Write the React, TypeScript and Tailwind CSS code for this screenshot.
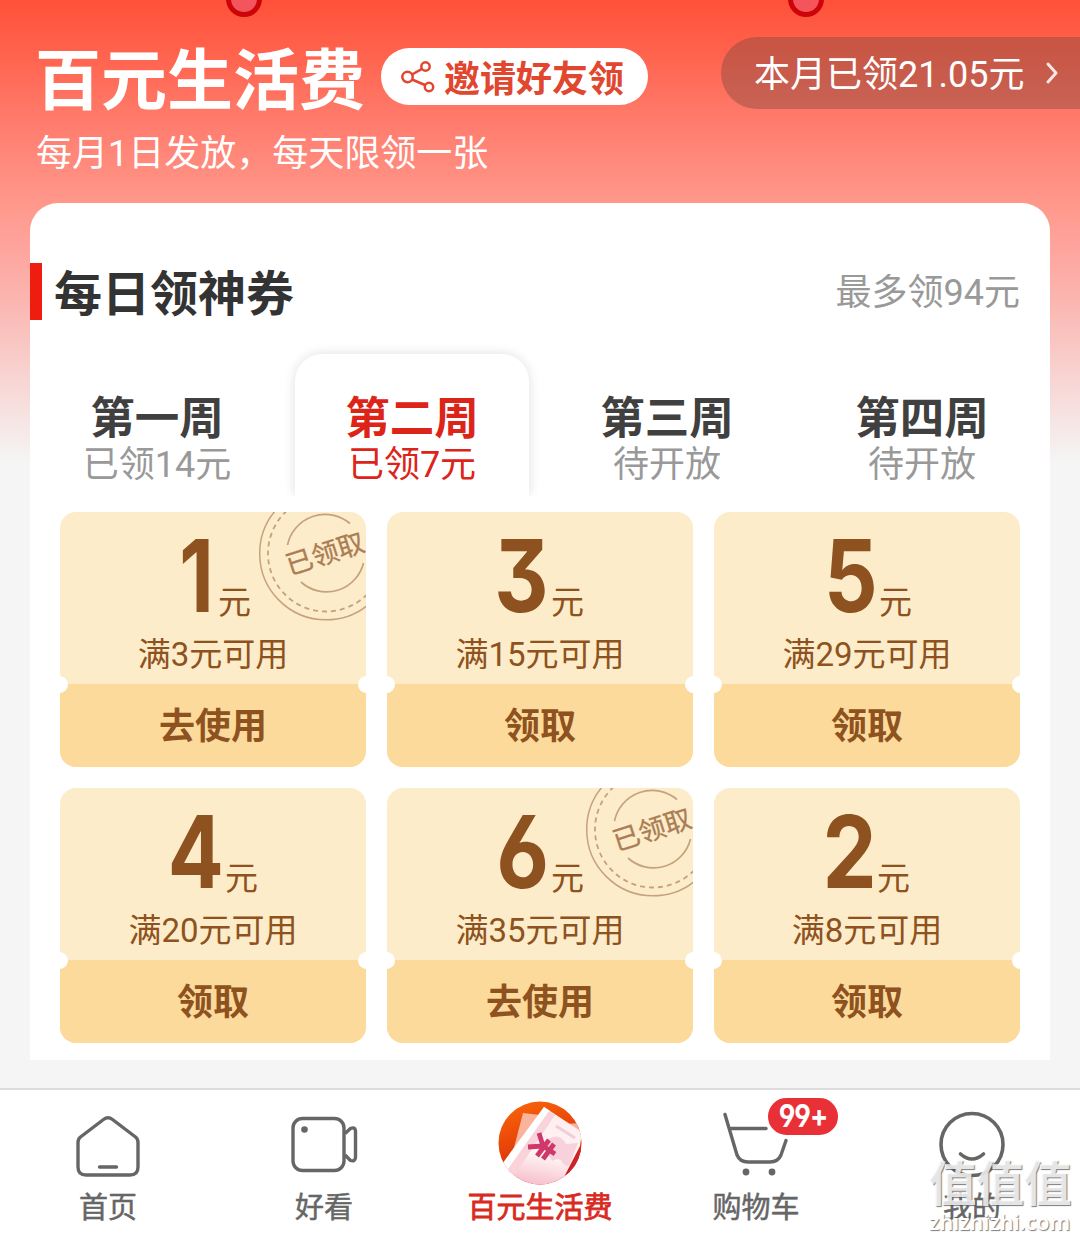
import React from "react";

type Coupon = { value: string; width: string; rule: string; used?: boolean };

const coupons: Coupon[] = [
  { value: "1", width: "w-[43px]", rule: "满3元可用", used: true },
  { value: "3", width: "w-[55px]", rule: "满15元可用" },
  { value: "5", width: "w-[57px]", rule: "满29元可用" },
  { value: "4", width: "w-[57px]", rule: "满20元可用" },
  { value: "6", width: "w-[55px]", rule: "满35元可用", used: true },
  { value: "2", width: "w-[53px]", rule: "满8元可用" },
];

const digitStyle: Record<string, string> = {
  "1": "scale-x-[0.8]",
  "2": "scale-x-[0.86] -translate-x-px",
  "3": "scale-x-[0.84] -translate-x-[2px]",
  "4": "scale-x-[0.83] -translate-x-px",
  "5": "scale-x-[0.84]",
  "6": "scale-x-[0.86] -translate-x-px",
};

const weeks = [
  { name: "第一周", note: "已领14元" },
  { name: "第二周", note: "已领7元", active: true },
  { name: "第三周", note: "待开放" },
  { name: "第四周", note: "待开放" },
];

function Stamp() {
  return (
    <svg className="absolute left-[196px] top-[-30px] h-[142px] w-[142px]" viewBox="0 0 142 142" fill="none" stroke="#a87a55" strokeOpacity="0.65">
      <circle cx="70" cy="71.500" r="66.300" strokeWidth="1.500" />
      <circle cx="70" cy="71.500" r="58" strokeWidth="1.800" strokeDasharray="5 4" />
      <path d="M31.500 63A38.500 38.500 0 0 1 94 41.500" strokeWidth="1.700" />
      <path d="M45 100A38 38 0 0 0 107.500 81" strokeWidth="1.700" />
      <text x="69" y="81" textAnchor="middle" fontSize="27" fontWeight="400" fill="#ab7d55" stroke="#ab7d55" strokeWidth="0.300" strokeOpacity="1" transform="rotate(-18 70 71.500)">已领取</text>
    </svg>
  );
}

function CouponCard({ value, width, rule, used }: Coupon) {
  return (
    <div className="relative flex h-[255px] flex-col overflow-hidden rounded-[16px] bg-[#fdecc9] text-[#8d5220]">
      <div className="flex h-[172px] flex-col items-center">
        <div className="mt-[15px] flex h-[100px] items-end justify-center">
          <span className={`flex h-[100px] justify-center pb-[2px] font-[Inter] text-[100px] font-[650] leading-[97px] [font-feature-settings:'cv03','cv09'] ${width}`}>
            <span className={digitStyle[value]}>{value}</span>
          </span>
          <span className="mb-[2px] text-[33px] leading-[44px]">元</span>
        </div>
        <p className="mt-[6px] text-[33px] leading-[44px]">{rule}</p>
      </div>
      <div className="flex h-[83px] items-center justify-center bg-[#fcda9b] pt-[2px] text-[36px] font-bold leading-[50px]">
        {used ? "去使用" : "领取"}
      </div>
      {used && <Stamp />}
      <i className="absolute left-[-9px] top-[164px] size-[17px] rounded-full bg-white" />
      <i className="absolute right-[-9px] top-[164px] size-[17px] rounded-full bg-white" />
    </div>
  );
}

function Pin() {
  return <i className="h-[36px] w-[36px] rounded-full border-[5px] border-[#cd0508] bg-[#f4555d]" />;
}

function NavItem({ label, active, children }: { label: string; active?: boolean; children: React.ReactNode }) {
  return (
    <div className={`relative flex w-[216px] flex-col items-center ${active ? "text-[#d92a22]" : "text-[#666]"}`}>
      <div className="h-[98px]">{children}</div>
      <span className={`text-[29px] leading-[40px] ${active ? "[-webkit-text-stroke:0.8px_currentColor]" : "[-webkit-text-stroke:0.5px_currentColor]"}`}>{label}</span>
    </div>
  );
}

export default function App() {
  return (
    <div className="relative flex h-[1240px] w-[1080px] flex-col overflow-hidden bg-[#f5f5f5] bg-[linear-gradient(180deg,#ff5138_0px,#ff6550_60px,#ff7b6c_120px,#ff988b_203px,#fea29a_240px,#fbb5b0_300px,#f7d5d3_380px,#f5f5f5_462px)] bg-no-repeat font-[Roboto,'Noto_Sans_CJK_SC',sans-serif]">
      <div className="absolute left-[226px] top-[-19px] flex gap-[526px]">
        <Pin />
        <Pin />
      </div>

      <header className="flex h-[203px] shrink-0 flex-col">
        <div className="mt-[37px] flex h-[84px] items-start">
          <h1 className="ml-[35px] mt-[5px] text-[66px] font-bold leading-[80px] text-white">百元生活费</h1>
          <div className="ml-[16px] mt-[11px] flex h-[57px] w-[267px] items-center rounded-full bg-white text-[#e1462f]">
            <svg className="ml-[20px] h-[34px] w-[36px]" viewBox="0 0 36 34" fill="none" stroke="currentColor" strokeWidth="2.500">
              <circle cx="6.500" cy="17" r="5.200" />
              <circle cx="24.500" cy="6.500" r="4.200" />
              <circle cx="28" cy="27" r="4.200" />
              <path d="M11 14.500 21 8.800M11 19.500l13 5.500" />
            </svg>
            <span className="ml-[7px] mt-[6px] text-[36px] font-bold leading-[50px]">邀请好友领</span>
          </div>
          <div className="ml-auto flex h-[72px] w-[359px] items-center rounded-l-full bg-[#75473c]/40 pl-[33px] text-[36px] text-white">
            <span className="mt-[3px] leading-[50px]">本月已领21.05元</span>
            <svg className="ml-[21px] h-[24px] w-[14px]" viewBox="0 0 14 24" fill="none" stroke="currentColor" strokeOpacity="0.850" strokeWidth="3" strokeLinecap="round" strokeLinejoin="round">
              <path d="m3 3 8 9-8 9" />
            </svg>
          </div>
        </div>
        <p className="ml-[36px] mt-[8px] text-[36px] leading-[50px] text-white">每月1日发放，每天限领一张</p>
      </header>

      <main className="mx-[30px] flex h-[857px] shrink-0 flex-col rounded-t-[28px] bg-white">
        <div className="mt-[60px] flex h-[57px] items-center">
          <i className="h-[57px] w-[12px] bg-[#ef1c10]" />
          <h2 className="ml-[12px] mt-[6px] text-[48px] font-bold leading-[60px] text-[#333]">每日领神券</h2>
          <span className="ml-auto mr-[30px] mt-[2px] text-[36px] leading-[50px] text-[#999]">最多领94元</span>
        </div>
        <div className="mt-[20px] flex h-[156px] items-end overflow-hidden">
          {weeks.map((w) => (
            <div
              key={w.name}
              className={`mr-[21px] flex h-[142px] w-[234px] flex-col items-center rounded-t-[27px] pt-[37px] first:ml-[10px] last:mr-0 ${
                w.active ? "text-[#dc2419] shadow-[0_0_12px_rgba(0,0,0,0.13)]" : ""
              }`}
            >
              <b className={`text-[44.5px] leading-[56px] ${w.active ? "" : "text-[#404040]"}`}>{w.name}</b>
              <span className={`mt-[-6px] text-[36px] leading-[48px] ${w.active ? "" : "text-[#999]"}`}>{w.note}</span>
            </div>
          ))}
        </div>
        <div className="mx-[30px] mt-[16px] grid grid-cols-3 gap-[21px]">
          {coupons.map((c) => (
            <CouponCard key={c.value} {...c} />
          ))}
        </div>
      </main>

      <nav className="relative mt-[28px] flex h-[152px] shrink-0 border-t-2 border-[#dcdcdc] bg-white">
        <NavItem label="首页">
          <svg className="mt-[24px] h-[66px] w-[66px]" viewBox="0 0 66 66" fill="none" stroke="currentColor" strokeWidth="3.400" strokeLinecap="round">
            <path d="M28.500 5.500Q33 2 37.500 5.500L60.500 23Q63 25 63 28.500V53Q63 61 55 61H11Q3 61 3 53V28.500Q3 25 5.500 23Z" />
            <path d="M24.500 53h17" />
          </svg>
        </NavItem>
        <NavItem label="好看">
          <svg className="mt-[24px] h-[66px] w-[70px]" viewBox="0 0 70 66" fill="none" stroke="currentColor" strokeWidth="3.400">
            <rect x="4" y="4.500" width="51" height="52" rx="9.500" />
            <circle cx="15.500" cy="15.500" r="3.300" fill="currentColor" stroke="none" />
            <path d="M56 19.500 61.500 14.500Q66 12.500 66.500 17V43.500Q66 48 61.500 46.500L56 41" />
          </svg>
        </NavItem>
        <NavItem label="百元生活费" active>
          <svg className="mt-[11px] h-[84px] w-[84px]" viewBox="0 0 84 84">
            <defs>
              <clipPath id="disc"><circle cx="42" cy="42" r="41.500" /></clipPath>
              <linearGradient id="orange" x1="0" y1="0" x2=".35" y2="1">
                <stop stopColor="#fb6a0a" /><stop offset=".55" stopColor="#e74208" /><stop offset="1" stopColor="#c81818" />
              </linearGradient>
              <linearGradient id="paper" x1=".5" y1="0" x2=".3" y2="1">
                <stop stopColor="#fdeef0" /><stop offset=".6" stopColor="#fff3f4" /><stop offset="1" stopColor="#f6bcc8" />
              </linearGradient>
            </defs>
            <g clipPath="url(#disc)">
              <rect width="84" height="84" fill="url(#orange)" />
              <path d="M25 12 42 14 32 55 12 62Z" fill="#f9b49a" />
              <path d="M65 23 84 22V36L76 31Z" fill="#f6b09c" />
              <path d="M46 6 84 31 82 45 62 84H24L4 66Z" fill="url(#paper)" />
              <path d="M46 6 52 10 10 70 4 63Z" fill="#fff" />
              <path d="M51 10 57 14 16 75 10 68Z" fill="#f9d2da" />
              <path d="M50 38Q62 31 68 43L80 42 71 65Q66 66 63 59 59 57 54 60 45 48 50 38" fill="#f7d2dc" />
              <path d="M58 25 77 37" stroke="#f2cdd5" strokeWidth="3" />
              <path d="M84 45 66 78 84 65Z" fill="#cc2332" />
              <path d="M41 32 45 45 30 46M45 45 57 53M51 39 39 55M56 43 45 58" fill="none" stroke="#d0386c" strokeWidth="4.800" />
            </g>
          </svg>
        </NavItem>
        <NavItem label="购物车">
          <svg className="mt-[20px] h-[66px] w-[68px]" viewBox="0 0 68 66" fill="none" stroke="currentColor" strokeWidth="3.400" strokeLinecap="round">
            <path d="M3 4.500 15 45Q18 52 26 52H48Q56 52 59 45L64 30.500" />
            <path d="M9 18.500H44" />
            <circle cx="24" cy="62" r="3.400" fill="currentColor" stroke="none" />
            <circle cx="50" cy="62" r="3.400" fill="currentColor" stroke="none" />
          </svg>
          <span className="absolute left-[118px] top-[6px] flex h-[41px] w-[74px] items-center justify-center rounded-full border-2 border-white bg-[#e93036] text-white">
            <span className="scale-y-[1.15] font-[Inter] text-[27px] font-bold leading-none tracking-[-1px] [font-feature-settings:'cv04']">99+</span>
          </span>
        </NavItem>
        <NavItem label="我的">
          <svg className="mt-[20px] h-[68px] w-[68px]" viewBox="0 0 68 68" fill="none" stroke="currentColor" strokeWidth="3.600" strokeLinecap="round">
            <circle cx="34" cy="34.500" r="31" />
            <path d="M22.500 44Q34 54 45.500 44" />
          </svg>
        </NavItem>
        <div className="absolute left-[929px] top-[65px] flex flex-col text-white/80 [text-shadow:1px_1px_1px_rgb(80_80_80/0.75)]">
          <span className="text-[47.500px] font-bold leading-[60px]">值值值</span>
          <span className="mt-[-7px] font-['Noto_Sans'] text-[21.500px] font-semibold leading-[28px] text-white">zhizhizhi.com</span>
        </div>
      </nav>
    </div>
  );
}
